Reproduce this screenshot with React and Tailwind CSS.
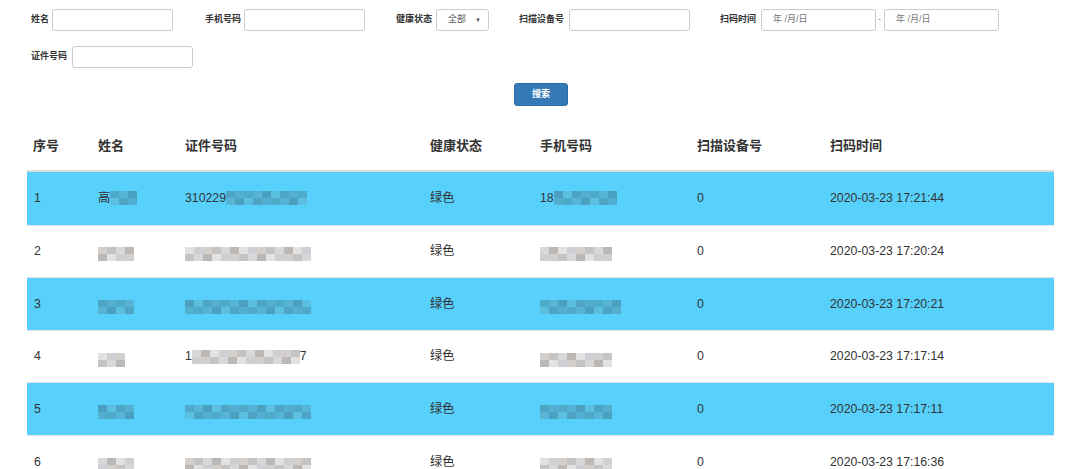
import React from 'react';

const cjk = { fontFamily: '"Liberation Sans", "Noto Sans CJK SC", sans-serif' };

const blueShades = ['#4fa9c9', '#56b4d6', '#4b9fbf', '#5bbfe0', '#4ea4c4', '#52afd0'];
const grayShades = ['#c6c4c2', '#d8d8d8', '#bcb8b6', '#e2e2e2', '#cdcfd2', '#d2cfcc'];

// pixelated blur block, like the masked cells in the screenshot
const Mosaic = ({ cells, blue, seed = 1 }) => {
    const shades = blue ? blueShades : grayShades;
    const pick = (i, r) => shades[(i * 7 + r * 3 + seed * 5) % shades.length];
    return (
        <div className="inline-flex flex-col blur-[0.7px] align-middle">
            {[0, 1].map((r) => (
                <div key={r} className="flex">
                    {Array.from({ length: cells }).map((_, i) => (
                        <div key={i} className="w-[9px] h-[7px]" style={{ background: pick(i, r) }} />
                    ))}
                </div>
            ))}
        </div>
    );
};

const rows = [
    { no: 1, name: { pre: '高', cells: 3 }, id: { pre: '310229', cells: 9 }, phone: { pre: '18', cells: 7 }, time: '2020-03-23 17:21:44' },
    { no: 2, name: { cells: 4 }, id: { cells: 14 }, phone: { cells: 8 }, time: '2020-03-23 17:20:24' },
    { no: 3, name: { cells: 4 }, id: { cells: 14 }, phone: { cells: 9 }, time: '2020-03-23 17:20:21' },
    { no: 4, name: { cells: 3 }, id: { pre: '1', cells: 12, post: '7' }, phone: { cells: 8 }, time: '2020-03-23 17:17:14' },
    { no: 5, name: { cells: 4 }, id: { cells: 14 }, phone: { cells: 8 }, time: '2020-03-23 17:17:11' },
    { no: 6, name: { cells: 4 }, id: { cells: 14 }, phone: { cells: 8 }, time: '2020-03-23 17:16:36' },
];

const cols = 'grid grid-cols-[65px_87px_245px_110px_157px_133px_1fr]';

const Masked = ({ v, blue, seed }) => (
    <span className="inline-flex items-center">
        {v.pre && <span>{v.pre}</span>}
        <Mosaic cells={v.cells} blue={blue} seed={seed} />
        {v.post && <span>{v.post}</span>}
    </span>
);

const Field = ({ label, width = 'w-[121px]', gap = 'gap-[4px]', className = '' }) => (
    <div className={`flex items-center ${gap} ${className}`}>
        <span className="text-[9px] font-bold text-[#333]">{label}</span>
        <div className={`${width} h-[22px] border border-[#ccc] rounded-[3px] bg-white`} />
    </div>
);

const DateBox = () => (
    <div className="w-[115px] h-[22px] border border-[#ccc] rounded-[3px] bg-white flex items-center pl-[11px] text-[9px] text-[#777]">
        年 /月/日
    </div>
);

export default function App() {
    return (
        <div className="w-[1080px] h-[469px] overflow-hidden bg-white text-[#333]" style={cjk}>
            {/* Filters */}
            <div className="pt-[9px] pl-[31px]">
                <div className="flex items-center">
                    <Field label="姓名" gap="gap-[3px]" />
                    <Field label="手机号码" className="ml-[32px]" gap="gap-[3px]" />
                    <div className="flex items-center gap-[4px] ml-[31px]">
                        <span className="text-[9px] font-bold">健康状态</span>
                        <div className="w-[53px] h-[22px] border border-[#ccc] rounded-[3px] bg-white flex items-center justify-between pl-[11px] pr-[7px] text-[9px] text-[#555]">
                            <span>全部</span>
                            <span className="text-[6px]">▼</span>
                        </div>
                    </div>
                    <Field label="扫描设备号" className="ml-[30px]" gap="gap-[5px]" />
                    <div className="flex items-center ml-[30px]">
                        <span className="text-[9px] font-bold mr-[5px]">扫码时间</span>
                        <DateBox />
                        <span className="text-[9px] text-[#777] ml-[2px] mr-[3px]">-</span>
                        <DateBox />
                    </div>
                </div>
                <div className="flex items-center mt-[15px]">
                    <Field label="证件号码" gap="gap-[5px]" />
                </div>
            </div>
            <div className="flex justify-center mt-[15px] pl-[2px]">
                <button className="w-[54px] h-[23px] bg-[#337ab7] border border-[#2e6da4] rounded-[3px] text-white text-[9px] font-bold">
                    搜索
                </button>
            </div>

            {/* Table */}
            <div className="mx-[27px] w-[1027px] mt-[15px]">
                <div className={`${cols} h-[51px] items-center border-b-2 border-[#ddd] text-[13px] font-bold`}>
                    {['序号', '姓名', '证件号码', '健康状态', '手机号码', '扫描设备号', '扫码时间'].map((h) => (
                        <div key={h} className="pl-[6px]">{h}</div>
                    ))}
                </div>
                {rows.map((r, i) => {
                    const blue = r.no % 2 === 1;
                    return (
                        <div
                            key={r.no}
                            className={`${cols} h-[52.6px] items-center text-[12.3px] ${i > 0 ? 'border-t border-[#e2e2e2]' : ''} ${blue ? 'bg-[#57d0fb]' : 'bg-white'}`}
                        >
                            <div className="pl-[7px]">{r.no}</div>
                            <div className="pl-[6px]"><Masked v={r.name} blue={blue} seed={i} /></div>
                            <div className="pl-[6px]"><Masked v={r.id} blue={blue} seed={i + 2} /></div>
                            <div className="pl-[6px]">绿色</div>
                            <div className="pl-[6px]"><Masked v={r.phone} blue={blue} seed={i + 4} /></div>
                            <div className="pl-[6px]">0</div>
                            <div className="pl-[6px]">{r.time}</div>
                        </div>
                    );
                })}
            </div>
        </div>
    );
}
